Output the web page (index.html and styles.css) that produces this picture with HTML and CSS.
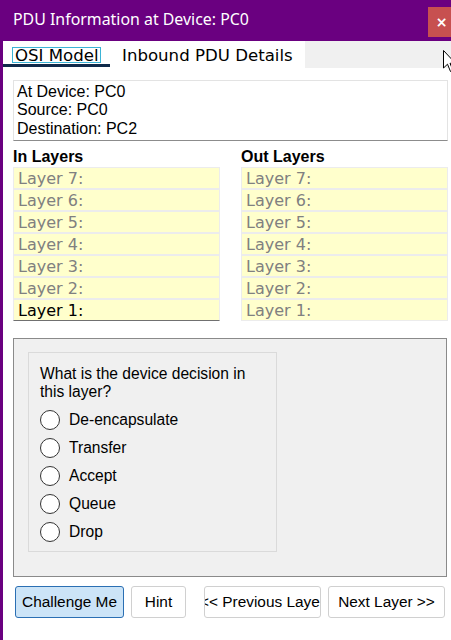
FILE: index.html
```html
<!DOCTYPE html>
<html>
<head>
<meta charset="utf-8">
<link rel="stylesheet" href="styles.css">
</head>
<body>
<div class="window">
  <div class="titlebar">
    <div class="title">PDU Information at Device: PC0</div>
    <div class="close">×</div>
  </div>
  <div class="client">
    <div class="tabbar">
      <div class="tabs">
        <div class="tab active"><span class="focus">OSI Model</span></div>
        <div class="tab">Inbound PDU Details</div>
      </div>
      <div class="tabrest"></div>
    </div>
    <div class="main">
      <div class="info">
        <div>At Device: PC0</div>
        <div>Source: PC0</div>
        <div>Destination: PC2</div>
      </div>
      <div class="layers">
        <div class="col">
          <div class="heading">In Layers</div>
          <div class="row">Layer 7:</div>
          <div class="row">Layer 6:</div>
          <div class="row">Layer 5:</div>
          <div class="row">Layer 4:</div>
          <div class="row">Layer 3:</div>
          <div class="row">Layer 2:</div>
          <div class="row current">Layer 1:</div>
        </div>
        <div class="col">
          <div class="heading">Out Layers</div>
          <div class="row">Layer 7:</div>
          <div class="row">Layer 6:</div>
          <div class="row">Layer 5:</div>
          <div class="row">Layer 4:</div>
          <div class="row">Layer 3:</div>
          <div class="row">Layer 2:</div>
          <div class="row">Layer 1:</div>
        </div>
      </div>
      <div class="panel">
        <div class="question">
          <div class="qtext">What is the device decision in this layer?</div>
          <div class="opt"><span class="radio"></span>De-encapsulate</div>
          <div class="opt"><span class="radio"></span>Transfer</div>
          <div class="opt"><span class="radio"></span>Accept</div>
          <div class="opt"><span class="radio"></span>Queue</div>
          <div class="opt"><span class="radio"></span>Drop</div>
        </div>
      </div>
      <div class="buttons">
        <div class="btn primary w-challenge">Challenge Me</div>
        <div class="btn w-hint">Hint</div>
        <div class="btn w-nav prev"><span>&lt;&lt; Previous Layer</span></div>
        <div class="btn w-nav">Next Layer &gt;&gt;</div>
      </div>
    </div>
  </div>
  <svg class="cursor" width="12" height="26" viewBox="0 0 12 26">
    <path d="M0.5 0.5 L0.5 18 L4.5 14.2 L7.5 21.5 L10 20.4 L7 13.3 L12.5 13.3 Z" fill="#fff" stroke="#000" stroke-width="1"/>
  </svg>
</div>
</body>
</html>
```
FILE: styles.css
```css
html, body {
  margin: 0;
  padding: 0;
}
body {
  width: 451px;
  height: 640px;
  overflow: hidden;
  background: #6a0080;
}
.window {
  position: relative;
  display: flex;
  flex-direction: column;
  height: 640px;
  background: #6a0080;
}
.titlebar {
  height: 41px;
  display: flex;
  align-items: flex-start;
  flex: none;
}
.title {
  padding: 8px 0 0 13px;
  color: #fff;
  font-family: "Noto Sans", "Open Sans", sans-serif;
  font-size: 15.9px;
  line-height: 22px;
}
.close {
  margin: 7px 0 0 auto;
  width: 23px;
  height: 30px;
  background: #c75050;
  color: #fff;
  font-family: "DejaVu Sans", sans-serif;
  font-weight: bold;
  font-size: 14px;
  line-height: 30px;
  text-align: center;
  padding-left: 4px;
  box-sizing: border-box;
}
.client {
  flex: 1;
  margin-left: 3px;
  background: #fff;
  display: flex;
  flex-direction: column;
}
.tabbar {
  display: flex;
  height: 27px;
  flex: none;
}
.tabs {
  width: 302px;
  display: flex;
  background: #fff;
}
.tabrest {
  flex: 1;
  background: #f0f0f0;
}
.tab {
  font-family: "DejaVu Sans", Verdana, sans-serif;
  font-size: 16.6px;
  color: #000;
  line-height: 13px;
  padding-top: 8px;
  box-sizing: border-box;
  height: 26px;
  margin-left: 12px;
}
.tab.active {
  width: 107px;
  margin-left: 0;
  padding-top: 6px;
  padding-left: 9px;
  border-bottom: 3px solid #0f2a4a;
}
.focus {
  display: inline-block;
  border: 1px solid #3bb4d6;
  padding: 1px 1px 0 2px;
  line-height: 13px;
}
.main {
  padding: 12px 3px 0 10px;
  display: flex;
  flex-direction: column;
}
.info {
  border: 1px solid #e3e3e3;
  border-bottom-color: #8c8c8c;
  padding: 2px 3px 0 3px;
  height: 61px;
  box-sizing: border-box;
  font-family: "Liberation Sans", Arial, sans-serif;
  font-size: 16px;
  line-height: 18.4px;
  color: #000;
}
.layers {
  display: grid;
  grid-template-columns: 207px 207px;
  column-gap: 21px;
  margin-top: 6px;
}
.heading {
  font-family: "Liberation Sans", Arial, sans-serif;
  font-weight: bold;
  font-size: 16px;
  line-height: 20px;
  height: 20px;
  color: #000;
}
.row {
  height: 22px;
  box-sizing: border-box;
  border: 1px solid #ececec;
  background: #ffffcc;
  padding-left: 4px;
  padding-top: 1px;
  font-family: "DejaVu Sans", Verdana, sans-serif;
  font-size: 16px;
  line-height: 20px;
  color: #808080;
}
.row.current {
  color: #000;
  border-bottom-color: #707070;
}
.panel {
  margin-top: 17px;
  height: 239px;
  box-sizing: border-box;
  border: 1px solid #8a8a8a;
  background: #f0f0f0;
  width: 434px;
  padding: 13px 0 0 14px;
}
.question {
  width: 249px;
  height: 200px;
  box-sizing: border-box;
  border: 1px solid #dadada;
  padding: 12px 8px 0 11px;
  font-family: "Liberation Sans", Arial, sans-serif;
  font-size: 15.6px;
  line-height: 18.4px;
  color: #000;
}
.qtext {
  margin-bottom: 4px;
}
.opt {
  height: 28px;
  display: flex;
  align-items: center;
  gap: 9px;
}
.radio {
  width: 20px;
  height: 20px;
  box-sizing: border-box;
  border: 1px solid #333;
  border-radius: 50%;
  background: #fff;
  flex: none;
}
.buttons {
  display: flex;
  margin-top: 9px;
  padding-left: 2px;
  gap: 7px;
}
.btn {
  height: 32px;
  box-sizing: border-box;
  border: 1px solid #d0d0d0;
  border-radius: 3px;
  background: #fff;
  display: flex;
  align-items: center;
  justify-content: center;
  overflow: hidden;
  white-space: nowrap;
  font-family: "Liberation Sans", Arial, sans-serif;
  font-size: 15.4px;
  color: #000;
}
.btn.primary {
  background: #cce4f7;
  border-color: #2b6fb3;
}
.w-challenge { width: 109px; }
.w-hint { width: 55px; }
.w-nav { width: 117px; }
.prev { margin-left: 11px; }
.prev span { flex: none; }
.cursor {
  position: absolute;
  left: 443px;
  top: 50px;
}
```
